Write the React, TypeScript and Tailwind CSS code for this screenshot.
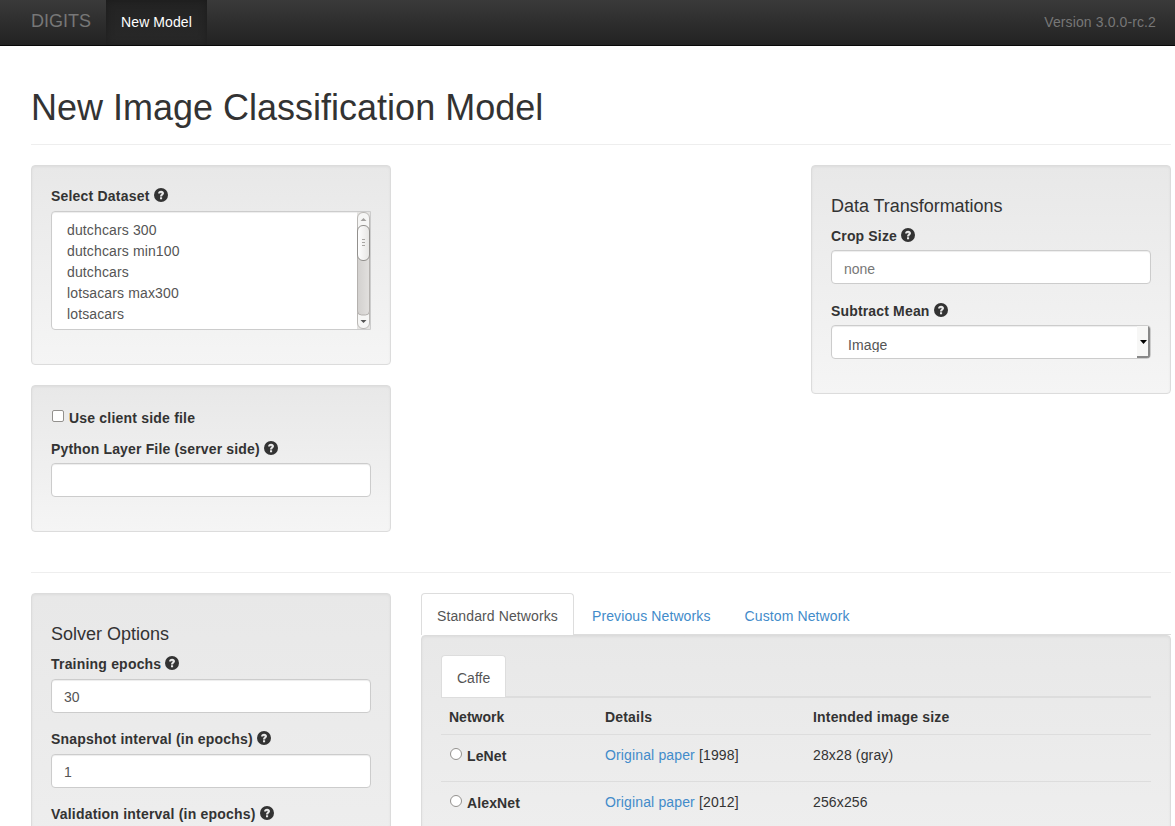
import type { ReactNode } from "react";

const WELL =
  "rounded-[4px] border border-[#dcdcdc] bg-linear-to-b from-[#e8e8e8] to-[#f5f5f5] p-[19px] shadow-[inset_0_1px_3px_rgba(0,0,0,0.05),0_1px_0_rgba(255,255,255,0.1)]";
const INPUT =
  "block h-[34px] w-full rounded-[4px] border border-[#ccc] bg-white px-3 text-[14px] text-[#555] placeholder-[#777] shadow-[inset_0_1px_1px_rgba(0,0,0,0.075)] outline-none";

function HelpIcon() {
  return (
    <svg width="14" height="14" viewBox="0 0 14 14" className="mt-[3px] ml-1 shrink-0">
      <circle cx="7" cy="7" r="7" fill="#333" />
      <path
        d="M4.100 5.500C4.100 3.700 5.300 2.700 7.100 2.700c1.700 0 2.900 1 2.900 2.500 0 1.900-1.900 1.900-1.900 3.200H6c0-2 1.600-2.100 1.600-3 0-.4-.2-.6-.6-.6-.5 0-.7.200-.7.700zM6 9.300h2.100V11.300H6z"
        fill="#e9e9e9"
      />
    </svg>
  );
}

function Label({ children, low }: { children: ReactNode; low?: boolean }) {
  return (
    <div
      className={
        low
          ? "flex h-[26px] items-start pt-px font-bold leading-[21px] tracking-[0.16px]"
          : "flex h-[26px] items-start font-bold leading-[21px] tracking-[0.2px]"
      }
    >
      <span className="pt-px">{children}</span>
      <HelpIcon />
    </div>
  );
}

interface FieldProps {
  label: string;
  value?: string;
  placeholder?: string;
  low?: boolean;
}

function Field({ label, value, placeholder, low }: FieldProps) {
  return (
    <div className="mb-[15px]">
      <Label low={low}>{label}</Label>
      <input
        className={low ? `${INPUT} pt-1` : `${INPUT} pt-[2px]`}
        defaultValue={value}
        placeholder={placeholder}
      />
    </div>
  );
}

const DATASETS = ["dutchcars 300", "dutchcars min100", "dutchcars", "lotsacars max300", "lotsacars"];

function Scrollbar() {
  return (
    <svg width="14" height="119" viewBox="0 0 14 119" className="-my-px -mr-px shrink-0">
      <defs>
        <linearGradient id="trough" x1="0" x2="1">
          <stop offset="0" stopColor="#d2d0ce" />
          <stop offset="1" stopColor="#e2e0de" />
        </linearGradient>
        <linearGradient id="thumb" x1="0" x2="1">
          <stop offset="0" stopColor="#ffffff" />
          <stop offset="1" stopColor="#e6e5e3" />
        </linearGradient>
      </defs>
      <rect width="14" height="119" fill="#c9c7c5" />
      <rect x="0" y="1" width="13" height="117" fill="#e4e3e1" />
      <rect x="0.5" y="1.500" width="12" height="116" rx="5.500" fill="#f6f6f5" stroke="#bab8b5" />
      <path d="M.5 20h12v80a4 4 0 0 1-4 4h-4a4 4 0 0 1-4-4z" fill="url(#trough)" stroke="#b4b1ae" />
      <rect x="0.5" y="14.500" width="12" height="35" rx="5.500" fill="url(#thumb)" stroke="#92908d" />
      <path d="M5 28.500h3M5 31.500h3M5 34.500h3" stroke="#a8a6a3" />
      <path d="M3.500 10l3-3 3 3z" fill="#a3a19f" />
      <path d="M3.500 109h6l-3 3z" fill="#555" />
    </svg>
  );
}

function Tab({ children, active }: { children: ReactNode; active?: boolean }) {
  return (
    <div
      className={
        active
          ? "relative z-10 mr-[2px] -mb-px h-[42px] rounded-t-[4px] border border-b-0 border-[#ddd] bg-white px-[15px] pt-3 leading-5 text-[#555]"
          : "mr-[2px] h-[41px] border border-b-0 border-transparent px-[15px] pt-3 leading-5 text-[#428bca]"
      }
    >
      {children}
    </div>
  );
}

function NetworkRow({ name, year, size }: { name: string; year: string; size: string }) {
  return (
    <div className="grid h-[47px] grid-cols-[156px_208px_1fr] border-t border-[#ddd] pt-[10px] leading-5">
      <div className="flex pl-2">
        <span className="mt-[3px] mr-[5px] ml-px size-3 rounded-full border border-[#93918e] bg-white" />
        <span className="pt-px font-bold tracking-[0.12px]">{name}</span>
      </div>
      <div className="pl-2 tracking-[0.14px]">
        <a className="text-[#428bca]">Original paper</a> [{year}]
      </div>
      <div className="pl-2 tracking-[0.14px]">{size}</div>
    </div>
  );
}

export default function App() {
  return (
    <div className="h-[826px] w-[1175px] overflow-hidden bg-white font-['Liberation_Sans',Arial,sans-serif] text-[14px] leading-5 text-[#333]">
      <nav className="flex h-[46px] items-stretch border-b border-[#080808] bg-linear-to-b from-[#3a3a3a] to-[#222] pl-[31px] text-[#777]">
        <div className="w-[75px] pt-[11px] text-[18px] leading-5">DIGITS</div>
        <div className="w-[101px] bg-linear-to-b from-[#232323] to-[#282828] pt-3 text-center tracking-[0.1px] text-white shadow-[inset_0_0_9px_rgba(0,0,0,0.25)]">
          New Model
        </div>
        <div className="ml-auto pt-3 pr-[19px] tracking-[0.11px]">Version 3.0.0-rc.2</div>
      </nav>

      <main className="pr-1 pl-[31px]">
        <header className="h-[99px] border-b border-[#eee] pt-[42px]">
          <h1 className="text-[36px] leading-10">New Image Classification Model</h1>
        </header>

        <section className="mt-5 flex items-start justify-between">
          <div className="flex w-[360px] flex-col gap-5">
            <div className={`${WELL} h-[200px]`}>
              <Label>Select Dataset</Label>
              <div className="flex h-[119px] overflow-hidden rounded-l-[4px] border border-[#ccc] bg-white shadow-[inset_0_1px_1px_rgba(0,0,0,0.075)]">
                <ul className="flex-1 pt-2 pl-[15px] leading-[21px] tracking-[0.13px] text-[#555]">
                  {DATASETS.map((name) => (
                    <li key={name}>{name}</li>
                  ))}
                </ul>
                <Scrollbar />
              </div>
            </div>
            <div className={`${WELL} h-[147px]`}>
              <div className="flex h-[32px] pt-[3px]">
                <span className="mt-[2px] mr-[5px] ml-px size-3 rounded-[2px] border border-[#93918e] bg-white" />
                <span className="font-bold tracking-[0.2px]">Use client side file</span>
              </div>
              <Field low label="Python Layer File (server side)" />
            </div>
          </div>

          <div className={`${WELL} h-[229px] w-[360px]`}>
            <h4 className="h-[39px] pt-[11px] text-[18px] leading-5 tracking-[-0.03px]">Data Transformations</h4>
            <Field low label="Crop Size" placeholder="none" />
            <Label low>Subtract Mean</Label>
            <div className="flex h-[34px] justify-between overflow-hidden rounded-[4px] border border-[#ccc] bg-white shadow-[inset_0_1px_1px_rgba(0,0,0,0.075)]">
              <div className="h-[26px] overflow-hidden pt-[9px] pl-4 tracking-[0.1px] text-[#555]">Image</div>
              <div className="flex h-8 w-[13px] items-center justify-center border-r-2 border-b-2 border-[#888] bg-[#f7f7f6] pt-[2px] pl-px">
                <svg width="7" height="4" viewBox="0 0 7 4" className="shrink-0">
                  <path d="M0 0h7L3.500 4z" fill="#000" />
                </svg>
              </div>
            </div>
          </div>
        </section>

        <hr className="mt-10 mb-5 border-t border-[#eee]" />

        <section className="flex items-start gap-[30px]">
          <div className={`${WELL} h-[560px] w-[360px]`}>
            <h4 className="h-10 pt-[11px] text-[18px] leading-5">Solver Options</h4>
            <Field label="Training epochs" value="30" />
            <Field label="Snapshot interval (in epochs)" value="1" />
            <Field label="Validation interval (in epochs)" value="1" />
          </div>

          <div className="w-[750px]">
            <div className="flex h-[42px] border-b border-[#ddd] tracking-[0.11px]">
              <Tab active>Standard Networks</Tab>
              <Tab>Previous Networks</Tab>
              <Tab>Custom Network</Tab>
            </div>
            <div className={`${WELL} h-[420px]`}>
              <div className="flex h-[42px] border-b border-[#ddd]">
                <Tab active>Caffe</Tab>
              </div>
              <div className="grid h-[37px] grid-cols-[156px_208px_1fr] border-t border-[#ddd] pt-[9px] font-bold tracking-[0.18px]">
                <div className="pl-2 tracking-normal">Network</div>
                <div className="pl-2">Details</div>
                <div className="pl-2">Intended image size</div>
              </div>
              <NetworkRow name="LeNet" year="1998" size="28x28 (gray)" />
              <NetworkRow name="AlexNet" year="2012" size="256x256" />
            </div>
          </div>
        </section>
      </main>
    </div>
  );
}
